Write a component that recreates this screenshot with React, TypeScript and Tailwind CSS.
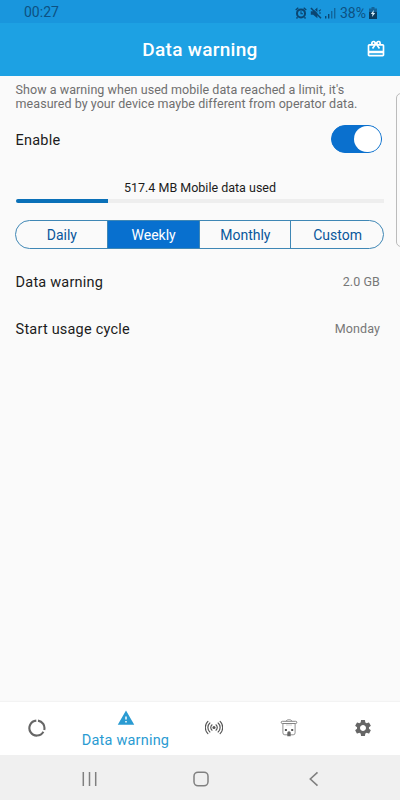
import type { ReactNode } from "react";
import { MdCardGiftcard, MdSettings, MdWarning } from "react-icons/md";

const PERIODS = ["Daily", "Weekly", "Monthly", "Custom"];

const ROWS = [
  { label: "Data warning", value: "2.0 GB" },
  { label: "Start usage cycle", value: "Monday" },
];

function AlarmIcon() {
  return (
    <svg width="12" height="12" viewBox="0 0 12 12" aria-hidden>
      <path d="M.7 3 3.3.8M11.3 3 8.7.8M2.5 10.3l-1 1.2M9.5 10.3l1 1.2" stroke="currentColor" strokeWidth="1.4" />
      <circle cx="6" cy="6.4" r="5" fill="currentColor" />
      <circle cx="6" cy="6.4" r="3" fill="#1996dd" />
      <path d="M6 4.3v2.4h2" fill="none" stroke="currentColor" strokeWidth="1.1" />
    </svg>
  );
}

function MuteIcon() {
  return (
    <svg width="12" height="12" viewBox="0 0 12 12" aria-hidden>
      <path d="M.8 4.2h2.4L7.4.6v10.6L3.2 7.8H.8z" fill="currentColor" />
      <path d="M8.8 4.2l2-1.6M9 6h2" stroke="currentColor" strokeWidth="1.1" />
      <path d="M1.8.2 11.8 10" stroke="#1996dd" strokeWidth="1" />
      <path d="M.9 1 11 11.2" stroke="currentColor" strokeWidth="1.5" />
    </svg>
  );
}

function SignalIcon() {
  return (
    <svg width="12" height="12" viewBox="0 0 12 12" fill="currentColor" aria-hidden>
      <rect x="0" y="9" width="1.4" height="2.5" />
      <rect x="3" y="7" width="1.4" height="4.5" />
      <rect x="6" y="4" width="1.4" height="7.5" opacity=".6" />
      <rect x="9" y="1" width="1.4" height="10.5" opacity=".6" />
    </svg>
  );
}

function BatteryIcon() {
  return (
    <svg width="8" height="12" viewBox="0 0 8 12" aria-hidden>
      <path d="M2.5 0h3v1.5H8V5H0V1.5h2.5z" fill="#12649b" />
      <path d="M0 5h8v7H0z" fill="#0b3d60" />
      <path d="M4.8 3 1.8 7h1.7L3 10l3.2-4H4.4z" fill="#d6eefa" />
    </svg>
  );
}

function UsageIcon() {
  return (
    <svg width="18" height="18" viewBox="0 0 18 18" fill="none" stroke="#666" strokeWidth="2.1" aria-hidden>
      <path d="M10 1.6a7.5 7.5 0 0 1 6.2 9.4" />
      <path d="M15.4 12.8A7.5 7.5 0 1 1 8.3 1.6" />
    </svg>
  );
}

function HotspotIcon() {
  return (
    <svg width="18" height="15" viewBox="0 0 20 16" fill="none" stroke="#555" strokeWidth="1.3" strokeLinecap="round" aria-hidden>
      <circle cx="10" cy="8" r="1.7" fill="#555" stroke="none" />
      <path d="M7.8 5a3.9 3.9 0 0 0 0 6M12.2 5a3.9 3.9 0 0 1 0 6" />
      <path d="M5.4 3a6.8 6.8 0 0 0 0 10M14.6 3a6.8 6.8 0 0 1 0 10" />
      <path d="M3.2 1.2a9.5 9.5 0 0 0 0 13.6M16.8 1.2a9.5 9.5 0 0 1 0 13.6" />
    </svg>
  );
}

function TrashIcon() {
  return (
    <svg width="18" height="18" viewBox="0 0 18 18" fill="none" stroke="#777" aria-hidden>
      <path d="M6 2.2Q6.5.6 9 .6t3 1.6" strokeWidth=".7" />
      <rect x="1.2" y="2.3" width="15.6" height="2.2" rx="1.1" strokeWidth=".9" />
      <path d="M2.9 4.7v9.2q0 1.9 1.9 1.9h8.4q1.9 0 1.9-1.9V4.7" strokeWidth=".8" />
      <path d="M7 5v2M9 5v1.8M11 5v2" strokeWidth=".6" opacity=".6" />
      <path d="M4.9 10h2v2h-2zM11.2 10h2v2h-2z" fill="#555" stroke="none" />
      <path d="M7.3 17.2v-3.5q0-1.5 1.7-1.5t1.7 1.5v3.5z" fill="#666" stroke="none" />
    </svg>
  );
}

function NavItem({ children }: { children: ReactNode }) {
  return <button className="flex w-[74px] items-center justify-center pb-[2px]">{children}</button>;
}

export default function App() {
  return (
    <div className="relative flex h-[800px] w-[400px] flex-col overflow-hidden bg-[#fafafa] font-['Roboto',sans-serif] text-[#1c1c1c]">
      <div className="flex h-[23px] shrink-0 items-center bg-[#1996dd] pt-[2px] pr-[23px] pl-6 text-[#0d5182]">
        <span className="text-[14px]">00:27</span>
        <div className="ml-auto flex items-center text-[#0b4672]">
          <AlarmIcon />
          <span className="ml-[3px]"><MuteIcon /></span>
          <span className="ml-[3px]"><SignalIcon /></span>
          <span className="mr-[3px] ml-[3px] text-[14px] leading-none text-[#0d5182]">38%</span>
          <BatteryIcon />
        </div>
      </div>
      <header className="relative flex h-[53px] shrink-0 items-center justify-center bg-[#1da1e3] pt-[2px] text-white">
        <h1 className="text-[19px] font-medium tracking-[0.3px]">Data warning</h1>
        <button className="absolute top-[16px] right-[14px]" aria-label="Gift">
          <MdCardGiftcard size={20} />
        </button>
      </header>

      <main className="flex-1 pr-4 pl-[15px]">
        <p className="mt-[7px] ml-[0.6px] text-[12.5px] leading-[14px] tracking-[0.05px] whitespace-nowrap text-[#6f6f6f]">
          Show a warning when used mobile data reached a limit, it's
          <br />
          measured by your device maybe different from operator data.
        </p>
        <div className="mt-[14px] flex h-7 items-center justify-between pr-[2px] pl-[0.6px]">
          <span className="pt-[3px] text-[14.5px] tracking-[0.2px]">Enable</span>
          <span className="flex h-7 w-[51px] justify-end rounded-full border border-[#0a70ce] bg-[#0a70ce]">
            <span className="h-[26px] w-[27px] rounded-full bg-white" />
          </span>
        </div>
        <div className="mt-[26px] pt-px pl-px text-center text-[12.5px] leading-4">517.4 MB Mobile data used</div>
        <div className="mt-[3px] ml-px h-1 overflow-hidden rounded-l-full bg-[#eeeeee]">
          <div className="h-full w-[92px] bg-[#0a70b8]" />
        </div>
        <div className="mt-[17px] grid h-[29px] grid-cols-4 overflow-hidden rounded-full border border-[#3f87b5]">
          {PERIODS.map((period) => (
            <button
              key={period}
              className={`border-r border-[#3f87b5] pt-px pl-px text-[14px] last:border-r-0 ${
                period === "Weekly" ? "bg-[#0870cf] text-white" : "text-[#08569b]"
              }`}
            >
              {period}
            </button>
          ))}
        </div>
        <div className="mt-[10px]">
          {ROWS.map((row) => (
            <div key={row.label} className="flex h-[47px] items-center justify-between pr-1 pl-[0.6px]">
              <span className="text-[14.5px] tracking-[0.2px]">{row.label}</span>
              <span className="text-[12.5px] tracking-[0.1px] text-[#777]">{row.value}</span>
            </div>
          ))}
        </div>
      </main>

      <div className="absolute top-[93px] -right-[6px] h-[154px] w-[10px] rounded-[6px] border border-[#bbb] bg-[#fafafa]" />

      <nav className="flex h-[53px] shrink-0 bg-white text-[#666] shadow-[0_-1px_1px_#f3f3f3]">
        <NavItem><UsageIcon /></NavItem>
        <button className="flex w-[103px] flex-col items-center pt-[7px] text-[#2a9bd2]">
          <MdWarning size={18} />
          <span className="mt-[4px] text-[14.5px] leading-[20px] tracking-[0.2px] whitespace-nowrap">Data warning</span>
        </button>
        <NavItem><HotspotIcon /></NavItem>
        <span className="ml-px flex"><NavItem><TrashIcon /></NavItem></span>
        <NavItem><MdSettings size={20} /></NavItem>
      </nav>
      <div className="flex h-[45px] shrink-0 items-center bg-[#f0f0f0] pt-[3px] pl-[82px] text-[#808080]">
        <svg width="15" height="16" viewBox="0 0 15 16" fill="none" stroke="currentColor" strokeWidth="1.5" aria-hidden>
          <path d="M1.3 1v14M7.5 1v14M13.7 1v14" />
        </svg>
        <svg className="ml-[96px]" width="16" height="16" viewBox="0 0 16 16" fill="none" stroke="currentColor" strokeWidth="1.5" aria-hidden>
          <rect x="1" y="1.2" width="14" height="13.6" rx="4" />
        </svg>
        <svg className="ml-[100px]" width="10" height="16" viewBox="0 0 10 16" fill="none" stroke="currentColor" strokeWidth="1.6" aria-hidden>
          <path d="M8.5 1.3 1.3 8l7.2 6.7" />
        </svg>
      </div>
    </div>
  );
}
